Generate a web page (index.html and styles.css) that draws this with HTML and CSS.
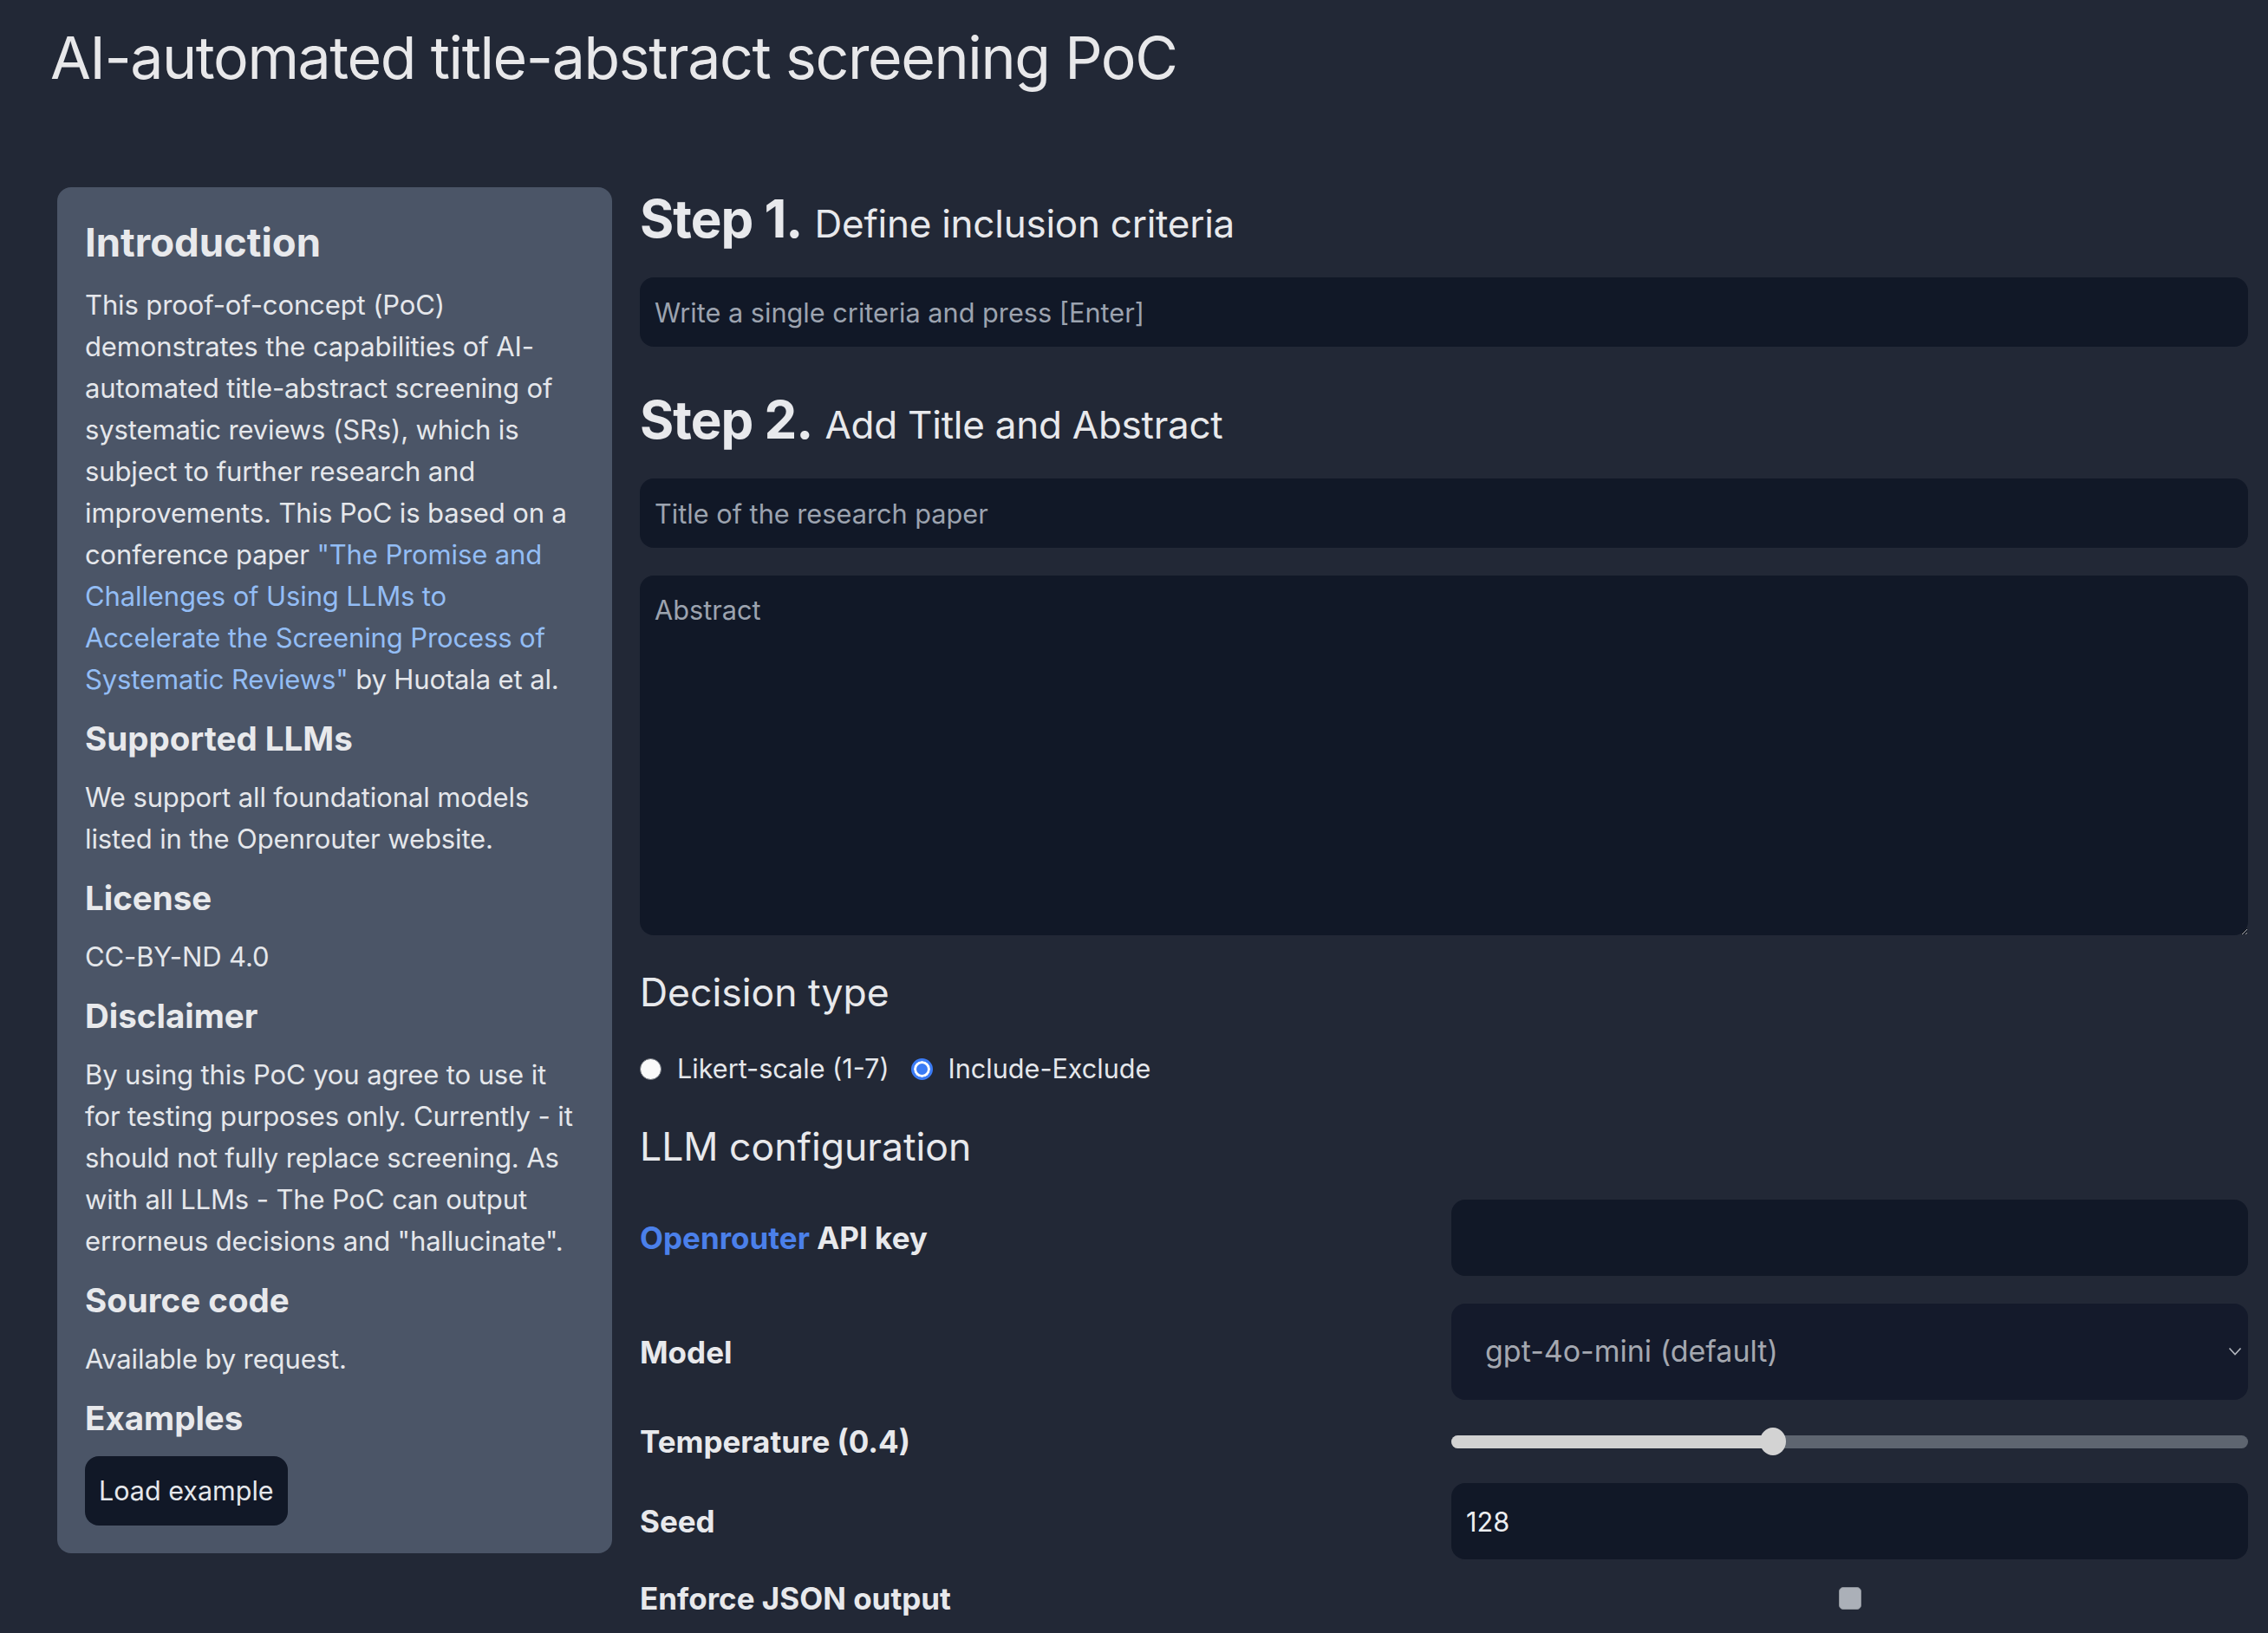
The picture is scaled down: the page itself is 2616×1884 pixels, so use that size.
FILE: index.html
```html
<!DOCTYPE html>
<html lang="en">
<head>
<meta charset="utf-8">
<title>AI-automated title-abstract screening PoC</title>
<link rel="stylesheet" href="styles.css">
</head>
<body>
<h1 class="page-title">AI-automated title-abstract screening PoC</h1>
<div class="layout">
  <aside class="card">
    <h2 class="card-h card-h--lg">Introduction</h2>
    <p class="card-p">This proof-of-concept (PoC)<br>demonstrates the capabilities of AI-<br>automated title-abstract screening of<br>systematic reviews (SRs), which is<br>subject to further research and<br>improvements. This PoC is based on a<br>conference paper <a class="card-link" href="#">"The Promise and<br>Challenges of Using LLMs to<br>Accelerate the Screening Process of<br>Systematic Reviews"</a> by Huotala et al.</p>
    <h2 class="card-h">Supported LLMs</h2>
    <p class="card-p">We support all foundational models<br>listed in the Openrouter website.</p>
    <h2 class="card-h">License</h2>
    <p class="card-p">CC-BY-ND 4.0</p>
    <h2 class="card-h">Disclaimer</h2>
    <p class="card-p">By using this PoC you agree to use it<br>for testing purposes only. Currently - it<br>should not fully replace screening. As<br>with all LLMs - The PoC can output<br>errorneus decisions and "hallucinate".</p>
    <h2 class="card-h">Source code</h2>
    <p class="card-p">Available by request.</p>
    <h2 class="card-h">Examples</h2>
    <div><button class="btn" type="button">Load example</button></div>
  </aside>
  <main class="main">
    <h2 class="step"><span class="step-num">Step 1.</span> <span class="step-text">Define inclusion criteria</span></h2>
    <input class="field field--first" type="text" placeholder="Write a single criteria and press [Enter]">
    <h2 class="step step--second"><span class="step-num">Step 2.</span> <span class="step-text">Add Title and Abstract</span></h2>
    <input class="field field--first" type="text" placeholder="Title of the research paper">
    <textarea class="field field--area" placeholder="Abstract"></textarea>
    <h3 class="sub sub--decision">Decision type</h3>
    <div class="radios">
      <label class="radio"><span class="radio-dot"></span>Likert-scale (1-7)</label>
      <label class="radio"><span class="radio-dot radio-dot--on"></span>Include-Exclude</label>
    </div>
    <h3 class="sub sub--llm">LLM configuration</h3>
    <div class="config">
      <div class="cfg-label"><a class="or-link" href="#">Openrouter</a> API key</div>
      <input class="field field--cfg" type="password">
      <div class="cfg-label">Model</div>
      <div class="select-wrap">
        <div class="select">gpt-4o-mini (default)</div>
        <svg class="chev" width="16" height="10" viewBox="0 0 16 10"><path d="M1.5 1.5 L8 8.5 L14.5 1.5" fill="none" stroke="#b4b8bf" stroke-width="1.6"/></svg>
      </div>
      <div class="cfg-label">Temperature (0.4)</div>
      <div class="slider">
        <div class="slider-track"><div class="slider-fill" style="width:40.4%"></div></div>
        <div class="slider-thumb" style="left:40.4%"></div>
      </div>
      <div class="cfg-label">Seed</div>
      <input class="field field--cfg field--value" type="text" value="128">
      <div class="cfg-label">Enforce JSON output</div>
      <div class="checkbox"></div>
    </div>
  </main>
</div>
</body>
</html>
```

FILE: styles.css
```css
* { box-sizing: border-box; }

html, body {
  margin: 0;
  background: #222836;
  color: #e5e7eb;
  font-family: Inter, "Noto Sans", "DejaVu Sans", sans-serif;
}

body {
  width: 2616px;
  min-height: 1884px;
}

.page-title {
  margin: 0;
  padding: 32px 0 0 58px;
  font-size: 68px;
  line-height: 68px;
  font-weight: 400;
  letter-spacing: -1.4px;
  color: #e8e8ea;
}

.layout {
  display: flex;
  align-items: flex-start;
  gap: 32px;
  margin-top: 116px;
  padding: 0 23px 0 66px;
}

/* ---------- sidebar card ---------- */
.card {
  flex: 0 0 640px;
  width: 640px;
  background: #4b5567;
  border-radius: 16px;
  padding: 32px 16px 32px 32px;
  display: flex;
  flex-direction: column;
  gap: 16px;
}

.card-h {
  margin: 0;
  font-size: 38.5px;
  line-height: 56px;
  font-weight: 700;
  color: #e8e9ec;
}

.card-h--lg {
  font-size: 45.5px;
  line-height: 64px;
}

.card-p {
  margin: 0;
  font-size: 31px;
  line-height: 48px;
  letter-spacing: -0.12px;
  color: #e5e7eb;
}

.card-link {
  color: #93bdf5;
  text-decoration: none;
}

.btn {
  display: inline-block;
  height: 80px;
  padding: 0 16px;
  border: none;
  border-radius: 16px;
  background: #111827;
  color: #e5e7eb;
  font-family: inherit;
  font-size: 30.5px;
  line-height: 48px;
}

/* ---------- main column ---------- */
.main {
  flex: 1 1 auto;
  min-width: 0;
}

.step {
  margin: 0;
  font-size: 60px;
  line-height: 72px;
  font-weight: 700;
  color: #e8e9ec;
  white-space: nowrap;
}

.step--second { margin-top: 48px; }

.step-num { letter-spacing: -1px; }

.step-text {
  font-size: 44px;
  line-height: 1;
  font-weight: 400;
  letter-spacing: -0.25px;
}

.field {
  display: block;
  width: 100%;
  border: none;
  outline: none;
  border-radius: 16px;
  background: #111827;
  color: #e5e7eb;
  font-family: inherit;
  font-size: 30.7px;
  line-height: 48px;
}

.field::placeholder { color: #9ca3af; }

.field--first {
  margin-top: 32px;
  height: 80px;
  padding: 0 17px;
}

.field--area {
  margin-top: 32px;
  height: 415px;
  padding: 16px 17px;
  resize: vertical;
}

.sub {
  margin: 0;
  font-size: 44.5px;
  line-height: 60px;
  font-weight: 400;
  color: #e8e9ec;
}

.sub--decision { margin-top: 36px; }
.sub--llm { margin-top: 36px; }

.radios {
  margin-top: 34px;
  display: flex;
  align-items: center;
  gap: 25px;
  height: 48px;
}

.radio {
  display: flex;
  align-items: center;
  gap: 18px;
  font-size: 30.6px;
  line-height: 48px;
  color: #e5e7eb;
}

.radio-dot {
  width: 25px;
  height: 25px;
  border-radius: 50%;
  background: #fafafa;
  border: 1.5px solid #6e737b;
  flex: 0 0 auto;
}

.radio-dot--on {
  background: #3b7bf5;
  border: 3px solid #3b7bf5;
  box-shadow: inset 0 0 0 3px #ffffff;
}

/* ---------- config grid ---------- */
.config {
  margin-top: 31px;
  display: grid;
  grid-template-columns: 1fr 1fr;
  column-gap: 17px;
  row-gap: 32px;
  align-items: center;
}

.cfg-label {
  font-size: 35px;
  line-height: 26px;
  font-weight: 700;
  color: #e8e9ec;
}

.or-link {
  color: #4b80ea;
  text-decoration: none;
}

.field--cfg {
  height: 88px;
  padding: 0 17px;
}

.field--value { color: #eceef1; }

.select-wrap { position: relative; }

.select {
  height: 111px;
  padding: 31px 39px;
  border-radius: 16px;
  background: #141a2b;
  color: #a4a8b0;
  font-size: 34px;
  line-height: 48px;
}

.chev {
  position: absolute;
  right: 7px;
  top: 50px;
}

.slider {
  position: relative;
  height: 32px;
  display: flex;
  align-items: center;
}

.slider-track {
  width: 100%;
  height: 15px;
  border-radius: 8px;
  background: #5e6570;
  overflow: hidden;
}

.slider-fill {
  height: 100%;
  background: #d2d2d2;
}

.slider-thumb {
  position: absolute;
  top: 0;
  width: 30px;
  height: 32px;
  margin-left: -15px;
  border-radius: 50%;
  background: #d3d3d3;
}

.checkbox {
  justify-self: center;
  width: 26px;
  height: 26px;
  border-radius: 5px;
  background: #abb0b8;
  border: 1px solid #8f949c;
}
```
